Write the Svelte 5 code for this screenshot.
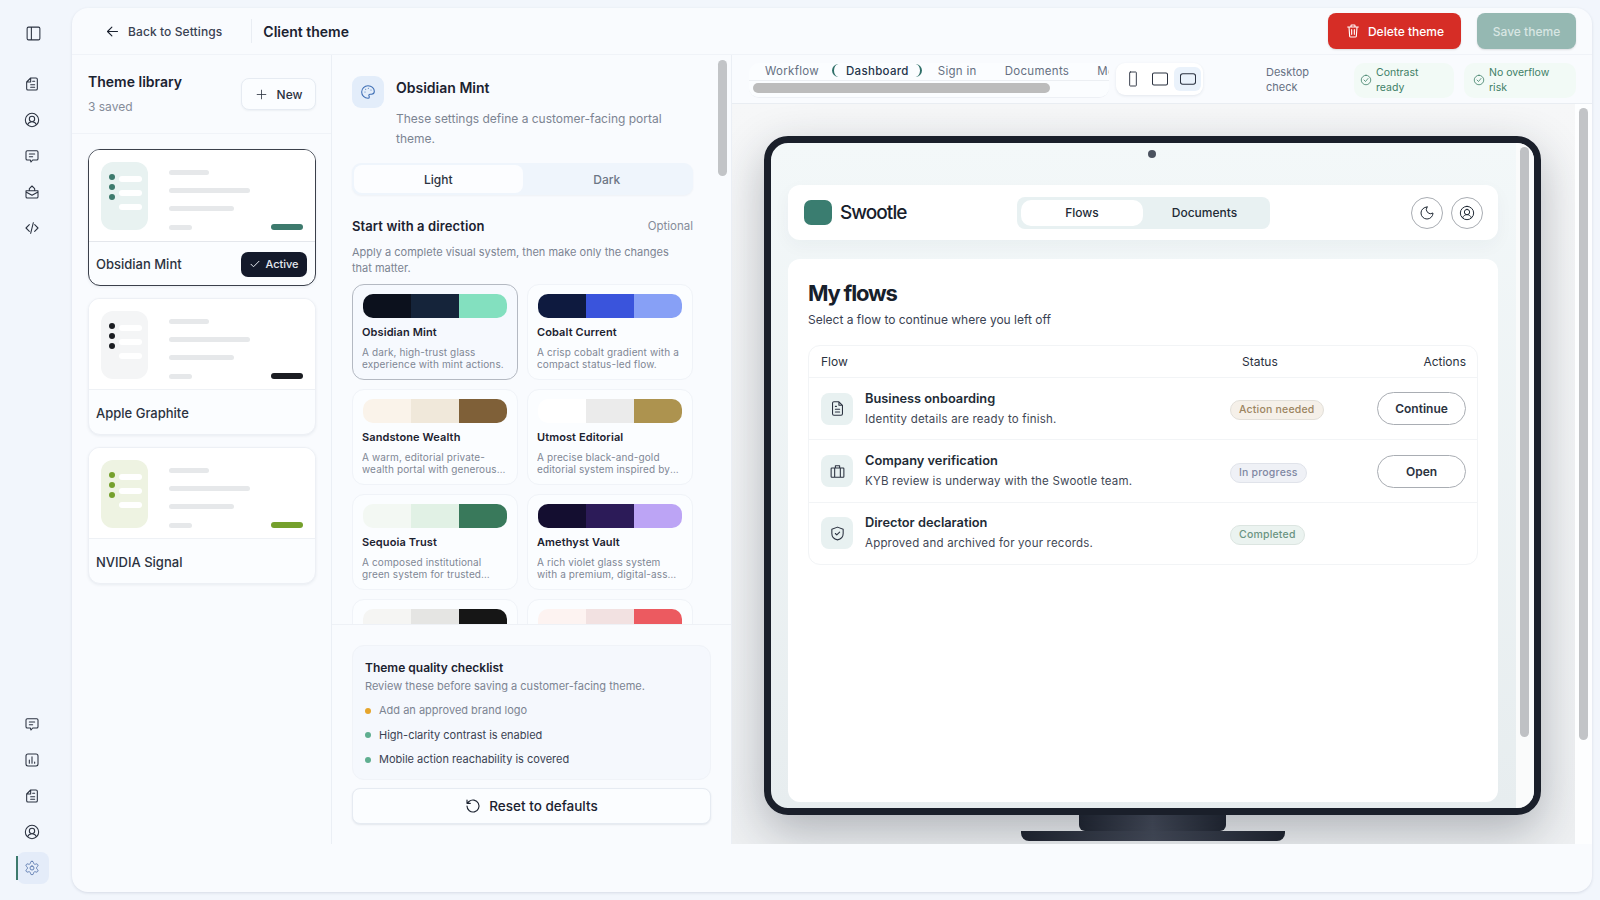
<script>
	const icons = {
		panel: 'M5 3h14a2 2 0 0 1 2 2v14a2 2 0 0 1-2 2H5a2 2 0 0 1-2-2V5a2 2 0 0 1 2-2z M9 3v18',
		doc: 'M10 3h8a2 2 0 0 1 2 2v14a2 2 0 0 1-2 2H6a2 2 0 0 1-2-2V9z M10 3v6H4 M10 13h6 M10 17h6 M13 8h3',
		user: 'M12 2a10 10 0 1 0 0 20a10 10 0 0 0 0-20z M12 6.500a4 4 0 1 0 0 8a4 4 0 0 0 0-8z M5.500 19c1-3 3.500-4.500 6.500-4.500s5.500 1.500 6.500 4.500',
		msg: 'M5 4h14a2 2 0 0 1 2 2v10a2 2 0 0 1-2 2h-6l-2.500 3l-1-3H5a2 2 0 0 1-2-2V6a2 2 0 0 1 2-2z M8 9h8 M8 13h5',
		mail: 'M3 10h18v9a2 2 0 0 1-2 2H5a2 2 0 0 1-2-2z M3 12l9 5l9-5 M8 10V7l4-4l4 4v3',
		code: 'M8 7l-5 5l5 5 M16 7l5 5l-5 5 M14 4l-4 16',
		chart: 'M6 3h12a3 3 0 0 1 3 3v12a3 3 0 0 1-3 3H6a3 3 0 0 1-3-3V6a3 3 0 0 1 3-3z M8 12v5 M12 7v10 M16 15v2',
		gear: 'M12.220 2h-.44a2 2 0 0 0-2 2v.18a2 2 0 0 1-1 1.730l-.43.25a2 2 0 0 1-2 0l-.15-.08a2 2 0 0 0-2.730.73l-.22.38a2 2 0 0 0 .73 2.730l.15.1a2 2 0 0 1 1 1.720v.51a2 2 0 0 1-1 1.740l-.15.09a2 2 0 0 0-.73 2.730l.22.38a2 2 0 0 0 2.730.73l.15-.08a2 2 0 0 1 2 0l.43.25a2 2 0 0 1 1 1.730V20a2 2 0 0 0 2 2h.44a2 2 0 0 0 2-2v-.18a2 2 0 0 1 1-1.730l.43-.25a2 2 0 0 1 2 0l.15.08a2 2 0 0 0 2.730-.73l.22-.39a2 2 0 0 0-.73-2.730l-.15-.08a2 2 0 0 1-1-1.740v-.5a2 2 0 0 1 1-1.740l.15-.09a2 2 0 0 0 .73-2.730l-.22-.38a2 2 0 0 0-2.730-.73l-.15.08a2 2 0 0 1-2 0l-.43-.25a2 2 0 0 1-1-1.730V4a2 2 0 0 0-2-2z M12 9a3 3 0 1 0 0 6a3 3 0 0 0 0-6z',
		back: 'M20 12H4 M11 19l-7-7l7-7',
		plus: 'M12 4v16 M4 12h16',
		check: 'M4 12.500l5 5L20 6.500',
		trash: 'M4 6h16 M9 6V4a1 1 0 0 1 1-1h4a1 1 0 0 1 1 1v2 M6 6l1 14a1.500 1.500 0 0 0 1.500 1h7a1.500 1.500 0 0 0 1.500-1l1-14 M10 10v7 M14 10v7',
		palette: 'M12 2.500a9.500 9.500 0 0 0 0 19a2 2 0 0 0 2-2c0-1-.8-1.500-.8-2.500c0-1 .8-1.500 1.800-1.500h2a4.500 4.500 0 0 0 4.500-4.500c0-4.500-4-8.500-9.500-8.500z M7.500 12h.01 M8.500 8h.01 M12.500 6.500h.01 M16.500 9h.01',
		reset: 'M3 12a9 9 0 1 0 3-6.700L3 8 M3 3v5h5',
		moon: 'M12 3a6.500 6.500 0 0 0 9 9a9 9 0 1 1-9-9z',
		file: 'M14 2.500H7a2 2 0 0 0-2 2v15a2 2 0 0 0 2 2h10a2 2 0 0 0 2-2v-12z M14 2.500v5h5 M9 9h1.500 M9 13h6 M9 17h6',
		case: 'M4 7h16a1 1 0 0 1 1 1v11a1 1 0 0 1-1 1H4a1 1 0 0 1-1-1V8a1 1 0 0 1 1-1z M9 7V4h6v3 M8 7v13 M16 7v13',
		shield: 'M12 3l8 3v6c0 5-3.500 8-8 9c-4.500-1-8-4-8-9V6z M9 12l2 2l4-4',
		circleCheck: 'M12 2.500a9.500 9.500 0 1 0 0 19a9.500 9.500 0 0 0 0-19z M8 12l3 3l5-6',
		phone: 'M8 1.500h8a1 1 0 0 1 1 1v19a1 1 0 0 1-1 1H8a1 1 0 0 1-1-1v-19a1 1 0 0 1 1-1z',
		tablet: 'M4 4h16a2 2 0 0 1 2 2v12a2 2 0 0 1-2 2H4a2 2 0 0 1-2-2V6a2 2 0 0 1 2-2z',
		desktop: 'M5 5h14a3 3 0 0 1 3 3v8a3 3 0 0 1-3 3H5a3 3 0 0 1-3-3V8a3 3 0 0 1 3-3z'
	};

	const navTop = ['doc', 'user', 'msg', 'mail', 'code'];
	const navBottom = ['msg', 'chart', 'doc', 'user'];

	const library = [
		{ name: 'Obsidian Mint', tint: '#e8f2f1', dot: '#3d7a6d', active: true },
		{ name: 'Apple Graphite', tint: '#f4f5f6', dot: '#1b1d22' },
		{ name: 'NVIDIA Signal', tint: '#eef3e2', dot: '#75a02c' }
	];

	const directions = [
		{ name: 'Obsidian Mint', desc: 'A dark, high-trust glass experience with mint actions.', colors: ['#0c111d', '#15243a', '#83e0bf'], selected: true },
		{ name: 'Cobalt Current', desc: 'A crisp cobalt gradient with a compact status-led flow.', colors: ['#0e1a3f', '#3a54dc', '#87a0f6'] },
		{ name: 'Sandstone Wealth', desc: 'A warm, editorial private-wealth portal with generous spacing.', colors: ['#faf3ea', '#f0e8da', '#7f6038'] },
		{ name: 'Utmost Editorial', desc: 'A precise black-and-gold editorial system inspired by luxury print.', colors: ['#ffffff', '#ebebeb', '#ad934f'] },
		{ name: 'Sequoia Trust', desc: 'A composed institutional green system for trusted advisors.', colors: ['#f3f8f3', '#e1f1e5', '#39795b'] },
		{ name: 'Amethyst Vault', desc: 'A rich violet glass system with a premium, digital-asset experience.', colors: ['#140e30', '#2c1b58', '#bca4f5'] },
		{ colors: ['#f5f5f3', '#e5e5e3', '#161616'] },
		{ colors: ['#fdf3f1', '#f2e1e1', '#ec5a60'] }
	];

	const checklist = [
		{ label: 'Add an approved brand logo', done: false },
		{ label: 'High-clarity contrast is enabled', done: true },
		{ label: 'Mobile action reachability is covered', done: true }
	];

	const flows = [
		{ icon: 'file', title: 'Business onboarding', sub: 'Identity details are ready to finish.', status: 'Action needed', tone: 'warn', action: 'Continue' },
		{ icon: 'case', title: 'Company verification', sub: 'KYB review is underway with the Swootle team.', status: 'In progress', tone: 'info', action: 'Open' },
		{ icon: 'shield', title: 'Director declaration', sub: 'Approved and archived for your records.', status: 'Completed', tone: 'ok' }
	];
</script>

{#snippet icon(name, size = 16, width = 1.6)}
	<svg class="icon" viewBox="0 0 24 24" width={size} height={size} stroke-width={width}><path d={icons[name]} /></svg>
{/snippet}

<div class="app">
	<nav class="rail">
		<div class="rail-toggle">{@render icon('panel', 17, 1.5)}</div>
		<div class="rail-group">
			{#each navTop as name}
				<div class="rail-item">{@render icon(name, 16, 1.6)}</div>
			{/each}
		</div>
		<div class="rail-group rail-bottom">
			{#each navBottom as name}
				<div class="rail-item">{@render icon(name, 16, 1.6)}</div>
			{/each}
			<div class="rail-item rail-active">{@render icon('gear', 16, 1.4)}</div>
		</div>
	</nav>

	<main class="shell">
		<header class="topbar">
			<button class="back">{@render icon('back', 15, 1.8)}<span>Back to Settings</span></button>
			<div class="topbar-title">Client theme</div>
			<div class="topbar-actions">
				<button class="btn-delete">{@render icon('trash', 16, 1.7)}<span>Delete theme</span></button>
				<button class="btn-save">Save theme</button>
			</div>
		</header>

		<div class="workspace">
			<section class="library">
				<div class="library-head">
					<div>
						<h2>Theme library</h2>
						<p>3 saved</p>
					</div>
					<button class="btn-new">{@render icon('plus', 13, 1.5)}<span>New</span></button>
				</div>
				<div class="library-list">
					{#each library as theme}
						<div class="theme-card" class:active={theme.active}>
							<div class="theme-preview">
								<div class="thumb" style:background={theme.tint}>
									<div class="thumb-dots">
										{#each [0, 1, 2] as i}
											<i style:background={theme.dot}></i>
										{/each}
									</div>
									<div class="thumb-bars">
										{#each [0, 1, 2] as i}
											<b></b>
										{/each}
									</div>
								</div>
								<div class="skeleton">
									<span class="sk" style="width: 40px"></span>
									<span class="sk" style="width: 81px"></span>
									<span class="sk" style="width: 65px"></span>
									<div class="sk-last">
										<span class="sk" style="width: 23px"></span>
										<span class="sk-btn" style:background={theme.dot}></span>
									</div>
								</div>
							</div>
							<div class="theme-foot">
								<span>{theme.name}</span>
								{#if theme.active}
									<span class="active-pill">{@render icon('check', 12, 2)}Active</span>
								{/if}
							</div>
						</div>
					{/each}
				</div>
			</section>

			<section class="editor">
				<div class="editor-scroll">
					<div class="editor-inner">
						<div class="intro">
							<div class="intro-icon">{@render icon('palette', 16, 1.6)}</div>
							<div>
								<h3>Obsidian Mint</h3>
								<p>These settings define a customer-facing portal theme.</p>
							</div>
						</div>
						<div class="mode">
							<span class="mode-on">Light</span>
							<span>Dark</span>
						</div>
						<div class="direction-head">
							<h4>Start with a direction</h4>
							<span>Optional</span>
						</div>
						<p class="direction-sub">Apply a complete visual system, then make only the changes that matter.</p>
						<div class="direction-grid">
							{#each directions as d}
								<div class="direction" class:selected={d.selected}>
									<div class="swatch">
										{#each d.colors as c}
											<span style:background={c}></span>
										{/each}
									</div>
									{#if d.name}
										<strong>{d.name}</strong>
										<p>{d.desc}</p>
									{/if}
								</div>
							{/each}
						</div>
					</div>
					<div class="scroll-thumb editor-thumb"></div>
				</div>
				<div class="editor-foot">
					<div class="checklist">
						<h5>Theme quality checklist</h5>
						<p>Review these before saving a customer-facing theme.</p>
						<ul>
							{#each checklist as item}
								<li class:done={item.done}><i></i>{item.label}</li>
							{/each}
						</ul>
					</div>
					<button class="btn-reset">{@render icon('reset', 16, 1.7)}<span>Reset to defaults</span></button>
				</div>
			</section>

			<section class="stage">
				<div class="stage-bar">
					<div class="tabs">
						<div class="tabs-row">
							<span class="tab-first">Workflow</span>
							<span class="tab-on">Dashboard</span>
							<span>Sign in</span>
							<span>Documents</span>
							<span>Mobile</span>
						</div>
						<div class="tabs-track"><div class="tabs-thumb"></div></div>
					</div>
					<div class="devices">
						<span>{@render icon('phone', 16, 1.4)}</span>
						<span>{@render icon('tablet', 18, 1.4)}</span>
						<span class="device-on">{@render icon('desktop', 18, 1.4)}</span>
					</div>
					<div class="check-label">Desktop check</div>
					<div class="chip chip-a">{@render icon('circleCheck', 12, 1.6)}<span>Contrast ready</span></div>
					<div class="chip chip-b">{@render icon('circleCheck', 12, 1.6)}<span>No overflow risk</span></div>
				</div>
				<div class="stage-body">
					<div class="canvas">
						<div class="monitor">
							<div class="camera"></div>
							<div class="screen-track"><div class="scroll-thumb screen-thumb"></div></div>
							<div class="portal-nav">
								<div class="brand"><span class="brand-mark"></span>Swootle</div>
								<div class="portal-tabs">
									<span class="portal-tab-on">Flows</span>
									<span>Documents</span>
								</div>
								<div class="portal-actions">
									<span>{@render icon('moon', 16, 1.5)}</span>
									<span>{@render icon('user', 16, 1.5)}</span>
								</div>
							</div>
							<div class="portal-card">
								<h1>My flows</h1>
								<p class="portal-sub">Select a flow to continue where you left off</p>
								<div class="flow-table">
									<div class="flow-row flow-head">
										<span>Flow</span>
										<span class="flow-status">Status</span>
										<span class="flow-actions">Actions</span>
									</div>
									{#each flows as flow}
										<div class="flow-row">
											<div class="flow-main">
												<div class="flow-icon">{@render icon(flow.icon, 17, 1.5)}</div>
												<div>
													<strong>{flow.title}</strong>
													<small>{flow.sub}</small>
												</div>
											</div>
											<div><span class="status {flow.tone}">{flow.status}</span></div>
											<div class="flow-actions">
												{#if flow.action}
													<button class="btn-flow">{flow.action}</button>
												{/if}
											</div>
										</div>
									{/each}
								</div>
							</div>
						</div>
						<div class="stand"></div>
						<div class="base"></div>
					</div>
					<div class="stage-gutter"><div class="scroll-thumb stage-thumb"></div></div>
				</div>
			</section>
		</div>
	</main>
</div>

<style>
	:global(body) {
		margin: 0;
		background: #f2f6fc;
		font-family: Inter, 'Noto Sans', sans-serif;
		color: #1b2230;
	}

	h1, h2, h3, h4, h5, p, ul {
		margin: 0;
		padding: 0;
	}

	button {
		font-family: inherit;
		cursor: pointer;
	}

	.icon {
		fill: none;
		stroke: currentColor;
		stroke-linecap: round;
		stroke-linejoin: round;
		flex: none;
		display: block;
	}

	.app {
		display: flex;
		width: 1600px;
		height: 900px;
		overflow: hidden;
	}

	/* left rail */
	.rail {
		width: 72px;
		flex: none;
		display: flex;
		flex-direction: column;
		padding-top: 25px;
		box-sizing: border-box;
		color: #2b3240;
	}

	.rail-toggle {
		padding-left: 25px;
		height: 18px;
	}

	.rail-group {
		display: flex;
		flex-direction: column;
		gap: 20px;
		margin-top: 33px;
		padding-left: 24px;
	}

	.rail-item {
		height: 16px;
	}

	.rail-bottom {
		margin-top: auto;
		padding-bottom: 24px;
	}

	.rail-active {
		position: relative;
		color: #5a78ae;
	}

	.rail-active::before {
		content: '';
		position: absolute;
		left: -7px;
		top: -8px;
		width: 32px;
		height: 32px;
		border-radius: 8px;
		background: #e4ecf9;
		z-index: -1;
	}

	.rail-active::after {
		content: '';
		position: absolute;
		left: -8px;
		top: -4px;
		width: 2px;
		height: 24px;
		background: #3d7a6d;
	}

	/* shell */
	.shell {
		width: 1520px;
		height: 884px;
		margin-top: 8px;
		background: #f9fbfe;
		border-radius: 16px;
		box-shadow: 0 1px 3px rgba(40, 60, 90, 0.14);
		overflow: hidden;
		display: flex;
		flex-direction: column;
	}

	.topbar {
		height: 47px;
		flex: none;
		display: flex;
		align-items: center;
		box-sizing: border-box;
		padding: 0 16px 0 33px;
		border-bottom: 1px solid #f0f3f8;
	}

	.back {
		display: flex;
		align-items: center;
		gap: 8px;
		background: none;
		border: 0;
		padding: 0 29px 0 0;
		height: 24px;
		font-size: 12px;
		font-weight: 500;
		letter-spacing: 0.1px;
		color: #3a4252;
		border-right: 1px solid #e9edf3;
	}

	.back .icon {
		color: #1b2230;
	}

	.topbar-title {
		margin-left: 11px;
		font-size: 14px;
		font-weight: 600;
	}

	.topbar-actions {
		margin-left: auto;
		display: flex;
		gap: 16px;
	}

	.btn-delete,
	.btn-save {
		height: 36px;
		border: 0;
		border-radius: 8px;
		color: #fff;
		font-size: 12px;
		font-weight: 500;
		display: flex;
		align-items: center;
		justify-content: center;
		box-shadow: 0 1px 2px rgba(0, 0, 0, 0.12);
	}

	.btn-delete {
		width: 133px;
		gap: 7px;
		background: #d62d26;
	}

	.btn-save {
		width: 99px;
		background: #95b8b2;
		color: #d8e6e3;
	}

	.workspace {
		height: 789px;
		flex: none;
		display: flex;
	}

	/* theme library */
	.library {
		width: 260px;
		flex: none;
		box-sizing: border-box;
		border-right: 1px solid #ebeff5;
	}

	.library-head {
		height: 79px;
		box-sizing: border-box;
		padding: 18px 15px 0 16px;
		display: flex;
		justify-content: space-between;
		border-bottom: 1px solid #f0f3f8;
	}

	.library-head h2 {
		font-size: 14px;
		font-weight: 600;
		line-height: 17px;
	}

	.library-head p {
		margin-top: 9px;
		font-size: 12px;
		color: #858c99;
	}

	.btn-new {
		width: 75px;
		height: 32px;
		margin-top: 5px;
		display: flex;
		align-items: center;
		justify-content: center;
		gap: 9px;
		font-size: 12px;
		font-weight: 500;
		color: #2b3240;
		background: #fbfdff;
		border: 1px solid #e6ebf2;
		border-radius: 8px;
		box-shadow: 0 1px 2px rgba(40, 60, 90, 0.06);
	}

	.library-list {
		padding: 15px 15px 0 16px;
		display: flex;
		flex-direction: column;
		gap: 12px;
	}

	.theme-card {
		height: 137px;
		box-sizing: border-box;
		border: 1px solid #edf0f5;
		border-radius: 12px;
		overflow: hidden;
		background: #fbfdff;
		box-shadow: 0 1px 3px rgba(40, 60, 90, 0.08);
	}

	.theme-card.active {
		border-color: #3b404b;
	}

	.theme-preview {
		height: 91px;
		box-sizing: border-box;
		padding: 12px 12px 0 12px;
		display: flex;
		background: #fff;
		border-bottom: 1px solid #eef1f5;
	}

	.theme-card.active .theme-preview {
		height: 92px;
		border-bottom-color: #e4e7ec;
	}

	.thumb {
		width: 47px;
		height: 68px;
		border-radius: 12px;
		box-sizing: border-box;
		padding: 12px 0 0 8px;
		display: flex;
		gap: 4px;
	}

	.thumb-dots {
		display: flex;
		flex-direction: column;
		gap: 4px;
	}

	.thumb-dots i {
		display: block;
		width: 6px;
		height: 6px;
		border-radius: 50%;
	}

	.thumb-bars {
		display: flex;
		flex-direction: column;
		gap: 8px;
		padding-top: 2px;
	}

	.thumb-bars b {
		display: block;
		width: 23px;
		height: 6px;
		border-radius: 3px;
		background: #fff;
	}

	.skeleton {
		flex: 1;
		margin-left: 21px;
		padding-top: 8px;
		display: flex;
		flex-direction: column;
		gap: 13px;
		align-items: flex-start;
	}

	.sk {
		display: block;
		height: 5px;
		border-radius: 3px;
		background: #e6e8ea;
	}

	.sk-last {
		width: 100%;
		display: flex;
		justify-content: space-between;
		align-items: center;
	}

	.sk-btn {
		width: 32px;
		height: 6px;
		border-radius: 3px;
	}

	.theme-foot {
		height: 44px;
		box-sizing: border-box;
		padding: 2px 8px 0 7px;
		display: flex;
		align-items: center;
		justify-content: space-between;
		font-size: 13px;
		font-weight: 500;
		color: #2b3240;
	}

	.theme-card.active .theme-foot {
		padding-top: 0;
	}

	.active-pill {
		height: 25px;
		width: 66px;
		border-radius: 7px;
		background: #141a2b;
		color: #e4e8ef;
		font-size: 11px;
		display: flex;
		align-items: center;
		justify-content: center;
		gap: 4px;
	}

	/* editor */
	.editor {
		width: 400px;
		flex: none;
		box-sizing: border-box;
		border-right: 1px solid #ebeff5;
		display: flex;
		flex-direction: column;
	}

	.editor-scroll {
		height: 569px;
		flex: none;
		position: relative;
		overflow: hidden;
		border-bottom: 1px solid #eef1f6;
	}

	.editor-inner {
		width: 341px;
		padding: 21px 0 0 20px;
	}

	.scroll-thumb {
		position: absolute;
		background: #c2c4c7;
		border-radius: 5px;
	}

	.editor-thumb {
		right: 4px;
		top: 5px;
		width: 9px;
		height: 116px;
	}

	.intro {
		display: flex;
		gap: 12px;
	}

	.intro-icon {
		width: 32px;
		height: 32px;
		flex: none;
		border-radius: 9px;
		background: #e3edfa;
		color: #3f6fb5;
		display: flex;
		align-items: center;
		justify-content: center;
	}

	.intro h3 {
		font-size: 14px;
		font-weight: 600;
		line-height: 17px;
		margin-top: 3px;
	}

	.intro p {
		margin-top: 13px;
		font-size: 12px;
		line-height: 20px;
		color: #7c8492;
	}

	.mode {
		margin-top: 14px;
		height: 32px;
		display: grid;
		grid-template-columns: 1fr 1fr;
		padding: 2px;
		box-sizing: border-box;
		background: #eff5fc;
		border-radius: 9px;
		font-size: 12px;
		font-weight: 500;
		color: #6d7685;
		box-shadow: 0 1px 2px rgba(40, 60, 90, 0.05);
	}

	.mode span {
		display: flex;
		align-items: center;
		justify-content: center;
	}

	.mode .mode-on {
		background: #fcfdff;
		border-radius: 8px;
		color: #2b3240;
	}

	.direction-head {
		margin-top: 23px;
		display: flex;
		align-items: center;
		justify-content: space-between;
	}

	.direction-head h4 {
		font-size: 13px;
		font-weight: 600;
		line-height: 16px;
		letter-spacing: 0.1px;
	}

	.direction-head span {
		font-size: 11.500px;
		color: #858c99;
	}

	.direction-sub {
		margin-top: 11px;
		padding-right: 10px;
		font-size: 11px;
		line-height: 15.500px;
		color: #7c8492;
	}

	.direction-grid {
		margin-top: 8px;
		display: grid;
		grid-template-columns: 166px 166px;
		gap: 9px 9px;
	}

	.direction {
		height: 96px;
		box-sizing: border-box;
		padding: 9px 10px;
		background: #fbfdff;
		border: 1px solid #f0f3f8;
		border-radius: 12px;
	}

	.direction.selected {
		border-color: #b4b9c2;
		background: #f6f9fe;
	}

	.swatch {
		height: 24px;
		display: grid;
		grid-template-columns: 1fr 1fr 1fr;
		border-radius: 10px;
		overflow: hidden;
	}

	.direction strong {
		display: block;
		margin-top: 7px;
		font-size: 11px;
		font-weight: 600;
		line-height: 14px;
		letter-spacing: 0.1px;
		margin-left: -1px;
	}

	.direction p {
		margin: 7px 0 0 -1px;
		font-size: 10px;
		line-height: 12px;
		letter-spacing: 0.12px;
		color: #7f8795;
		display: -webkit-box;
		-webkit-box-orient: vertical;
		-webkit-line-clamp: 2;
		line-clamp: 2;
		overflow: hidden;
	}

	.editor-foot {
		padding: 20px 20px 0;
		height: 220px;
		box-sizing: border-box;
		flex: none;
	}

	.checklist {
		height: 135px;
		box-sizing: border-box;
		padding: 14px 12px 0;
		background: #f5f8fd;
		border: 1px solid #f0f3f8;
		border-radius: 12px;
	}

	.checklist h5 {
		font-size: 12px;
		font-weight: 600;
		line-height: 15px;
	}

	.checklist p {
		margin-top: 4px;
		font-size: 11px;
		line-height: 15px;
		color: #7c8492;
	}

	.checklist ul {
		list-style: none;
		margin-top: 9px;
		display: flex;
		flex-direction: column;
		gap: 9px;
	}

	.checklist li {
		display: flex;
		align-items: center;
		gap: 8px;
		font-size: 11px;
		line-height: 15.500px;
		color: #7c8492;
	}

	.checklist li.done {
		color: #3a4252;
	}

	.checklist li i {
		width: 6px;
		height: 6px;
		border-radius: 50%;
		background: #e6a52c;
	}

	.checklist li.done i {
		background: #5fae90;
	}

	.btn-reset {
		width: 100%;
		height: 36px;
		margin-top: 8px;
		display: flex;
		align-items: center;
		justify-content: center;
		gap: 8px;
		font-size: 13.500px;
		font-weight: 500;
		color: #1b2230;
		background: #fbfdff;
		border: 1px solid #e6ebf2;
		border-radius: 8px;
		box-shadow: 0 1px 2px rgba(40, 60, 90, 0.1);
	}

	/* preview stage */
	.stage {
		flex: 1;
		min-width: 0;
		display: flex;
		flex-direction: column;
	}

	.stage-bar {
		height: 49px;
		flex: none;
		box-sizing: border-box;
		display: flex;
		align-items: flex-start;
		padding: 8px 15px 0 17px;
		border-bottom: 1px solid #e9edf2;
		font-size: 11px;
	}

	.tabs {
		width: 360px;
		height: 34px;
		flex: none;
		overflow: hidden;
		position: relative;
		border-radius: 10px;
		background: #fbfdff;
		border-bottom: 1px solid #edf0f5;
	}

	.tabs-row {
		display: flex;
		align-items: flex-start;
		font-size: 11.500px;
		line-height: 14px;
		letter-spacing: 0.3px;
		color: #667082;
		white-space: nowrap;
		padding: 1px 0 0 16px;
	}

	.tabs-row span {
		margin-right: 28px;
	}

	.tabs-row .tab-first {
		margin-right: 13px;
	}

	.tabs-row .tab-on {
		margin-right: 16px;
		padding: 0 11px 0 12px;
		color: #24344a;
		font-weight: 500;
		border-left: 2.500px solid #2f6f68;
		border-right: 2.500px solid #2f6f68;
		border-radius: 7px;
		height: 13px;
	}

	.tabs-track {
		position: absolute;
		left: 0;
		right: 0;
		top: 17px;
		height: 17px;
		background: #fbfdff;
		border-top: 1px solid #eceff3;
	}

	.tabs-thumb {
		margin: 2px 0 0 4px;
		width: 297px;
		height: 10px;
		background: #bcbcbc;
		border-radius: 5px;
	}

	.devices {
		margin-left: 7px;
		width: 87px;
		height: 32px;
		flex: none;
		box-sizing: border-box;
		display: flex;
		align-items: center;
		padding: 0 2px 0 3px;
		background: #fff;
		border-radius: 9px;
		color: #2b3240;
		box-shadow: 0 1px 3px rgba(40, 60, 90, 0.1);
	}

	.devices span {
		width: 27px;
		height: 24px;
		display: flex;
		align-items: center;
		justify-content: center;
		border-radius: 6px;
	}

	.devices .device-on {
		background: #eaf2fb;
		margin-left: 1px;
		color: #2b3240;
	}

	.check-label {
		margin-left: 63px;
		width: 70px;
		padding-top: 2px;
		flex: none;
		line-height: 15px;
		color: #667082;
	}

	.chip {
		height: 35px;
		box-sizing: border-box;
		display: flex;
		align-items: center;
		gap: 4px;
		padding-left: 6px;
		padding-bottom: 2px;
		line-height: 15px;
		font-size: 10.500px;
		color: #3e7f67;
		background: #f2faf6;
		border-radius: 10px;
	}

	.chip-a {
		margin-left: 18px;
		width: 100px;
		padding-right: 22px;
	}

	.chip-b {
		margin-left: 10px;
		width: 112px;
		padding-left: 9px;
		padding-right: 26px;
	}

	.stage-body {
		flex: 1;
		min-height: 0;
		display: flex;
	}

	.canvas {
		width: 843px;
		flex: none;
		box-sizing: border-box;
		padding: 32px 0 0 32px;
		background: linear-gradient(#f6f7f8, #eef0f2);
		overflow: hidden;
		display: flex;
		flex-direction: column;
		align-items: flex-start;
	}

	.stage-gutter {
		flex: 1;
		position: relative;
		background: #fdfeff;
	}

	.stage-thumb {
		left: 4px;
		top: 4px;
		width: 9px;
		height: 632px;
	}

	.monitor {
		width: 777px;
		height: 679px;
		flex: none;
		box-sizing: border-box;
		position: relative;
		border: 7px solid #1a1f2a;
		border-radius: 24px;
		background: linear-gradient(#f3f8f9, #e7edef);
		padding: 42px 36px 0 17px;
		box-shadow: 0 16px 46px rgba(30, 35, 50, 0.3);
		overflow: hidden;
	}

	.camera {
		position: absolute;
		left: 377px;
		top: 7px;
		width: 8px;
		height: 8px;
		border-radius: 50%;
		background: #4b525f;
	}

	.screen-track {
		position: absolute;
		right: 0;
		top: 0;
		bottom: 0;
		width: 18px;
		background: #fafbfb;
	}

	.screen-thumb {
		right: 5px;
		top: 4px;
		width: 9px;
		height: 590px;
		background: #bfc1c4;
	}

	.portal-nav {
		height: 55px;
		box-sizing: border-box;
		background: #fff;
		border-radius: 12px;
		display: flex;
		align-items: center;
		padding: 0 15px 0 16px;
		position: relative;
		box-shadow: 0 6px 18px rgba(30, 60, 70, 0.04);
	}

	.brand {
		display: flex;
		align-items: center;
		gap: 8px;
		width: 213px;
		font-size: 19px;
		font-weight: 500;
		letter-spacing: -0.95px;
		color: #17202b;
	}

	.brand-mark {
		width: 28px;
		height: 25px;
		border-radius: 7px;
		background: #3a7d70;
	}

	.portal-tabs {
		width: 253px;
		height: 32px;
		box-sizing: border-box;
		padding: 3px 4px;
		background: #e8f1f2;
		border-radius: 8px;
		display: grid;
		grid-template-columns: 122px 1fr;
		font-size: 12px;
		font-weight: 500;
		color: #222b36;
	}

	.portal-tabs span {
		display: flex;
		align-items: center;
		justify-content: center;
	}

	.portal-tabs .portal-tab-on {
		background: #fff;
		border-radius: 10px;
	}

	.portal-actions {
		margin-left: auto;
		display: flex;
		gap: 8px;
	}

	.portal-actions span {
		width: 32px;
		height: 32px;
		box-sizing: border-box;
		border: 1px solid #a9adb3;
		border-radius: 50%;
		display: flex;
		align-items: center;
		justify-content: center;
		color: #222b36;
	}

	.portal-card {
		margin-top: 19px;
		height: 543px;
		box-sizing: border-box;
		padding: 20px 20px 0;
		background: #fff;
		border-radius: 12px;
		position: relative;
	}

	.portal-card h1 {
		font-size: 22px;
		font-weight: 700;
		line-height: 28px;
		letter-spacing: -1.2px;
		color: #17202b;
	}

	.portal-sub {
		margin-top: 5px;
		font-size: 12px;
		line-height: 16px;
		color: #3a4252;
	}

	.flow-table {
		margin-top: 17px;
		height: 220px;
		box-sizing: border-box;
		border: 1px solid #f2f4f6;
		border-radius: 12px;
	}

	.flow-row {
		height: 62.400px;
		box-sizing: border-box;
		padding: 0 11px 0 12px;
		display: grid;
		grid-template-columns: 409px 1fr 120px;
		align-items: center;
		border-top: 1px solid #f2f4f6;
	}

	.flow-row.flow-head {
		height: 31px;
		border-top: 0;
		font-size: 12px;
		color: #2b3240;
	}

	.flow-status {
		padding-left: 12px;
	}

	.flow-actions {
		justify-self: end;
	}

	.flow-main {
		display: flex;
		align-items: center;
		gap: 12px;
	}

	.flow-icon {
		width: 32px;
		height: 32px;
		flex: none;
		border-radius: 8px;
		background: #e8f1f1;
		color: #2b3240;
		display: flex;
		align-items: center;
		justify-content: center;
	}

	.flow-main strong {
		display: block;
		font-size: 12.800px;
		font-weight: 600;
		line-height: 16px;
		color: #222b36;
	}

	.flow-main small {
		display: block;
		margin-top: 5px;
		font-size: 11.500px;
		line-height: 15px;
		letter-spacing: 0.2px;
		color: #3f4755;
	}

	.status {
		display: inline-block;
		height: 20px;
		box-sizing: border-box;
		padding: 0 8px;
		border: 1px solid;
		border-radius: 10px;
		font-size: 10.500px;
		font-weight: 500;
		line-height: 18px;
		letter-spacing: 0.2px;
	}

	.status.warn {
		color: #9c8561;
		background: #f5f0e9;
		border-color: #e2dfd9;
	}

	.status.info {
		color: #7f88a3;
		background: #eff1f6;
		border-color: #e0e3ea;
	}

	.status.ok {
		color: #6a9482;
		background: #ebf3f0;
		border-color: #dce5e1;
	}

	.btn-flow {
		width: 89px;
		height: 33px;
		background: #fff;
		border: 1px solid #a9adb3;
		border-radius: 17px;
		font-size: 12px;
		font-weight: 600;
		color: #2b3240;
	}

	.stand {
		margin-left: 315px;
		width: 147px;
		height: 17px;
		flex: none;
		border-radius: 0 0 6px 6px;
		background: linear-gradient(90deg, #1d222d, #434957 50%, #1d222d);
		margin-top: -1px;
	}

	.base {
		margin-left: 257px;
		width: 264px;
		height: 10px;
		flex: none;
		border-radius: 0 0 8px 8px;
		background: linear-gradient(90deg, #1d222d, #434957 50%, #1d222d);
	}
</style>
